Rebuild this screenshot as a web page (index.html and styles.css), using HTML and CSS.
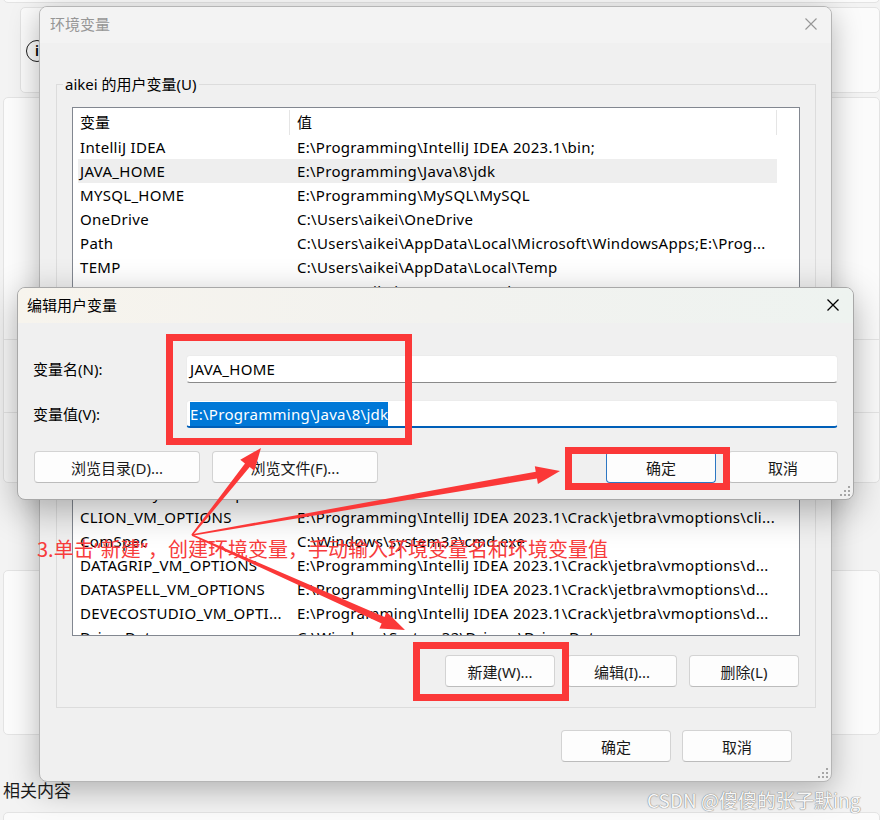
FILE: index.html
```html
<!DOCTYPE html>
<html lang="zh-CN">
<head>
<meta charset="utf-8">
<title>环境变量</title>
<link rel="stylesheet" href="styles.css">
</head>
<body>
<div class="desk">
  <div class="settings">
    <div class="card c0"></div>
    <div class="card c1"><span class="info-ic">i</span></div>
    <div class="card c2">
      <div class="srow s1"></div>
      <div class="srow s2"></div>
      <div class="srow s3"></div>
    </div>
    <div class="card c3"></div>
    <div class="related">相关内容</div>
    <div class="card c4"></div>
  </div>

  <div class="win env">
    <div class="titlebar">
      <span class="title">环境变量</span>
      <svg class="xicon" width="12" height="12" viewBox="0 0 12 12"><path d="M0.5 0.5L11.5 11.5M11.5 0.5L0.5 11.5" stroke="currentColor" stroke-width="1.1" fill="none"/></svg>
    </div>
    <div class="group">
      <span class="legend">aikei 的用户变量(U)</span>
      <div class="list">
        <div class="lrow lhead"><span class="c-name hc">变量</span><span class="c-val hc">值</span></div>
        <div class="lrow"><span class="c-name">IntelliJ IDEA</span><span class="c-val">E:\Programming\IntelliJ IDEA 2023.1\bin;</span></div>
        <div class="lrow sel"><span class="c-name">JAVA_HOME</span><span class="c-val">E:\Programming\Java\8\jdk</span></div>
        <div class="lrow"><span class="c-name">MYSQL_HOME</span><span class="c-val">E:\Programming\MySQL\MySQL</span></div>
        <div class="lrow"><span class="c-name">OneDrive</span><span class="c-val">C:\Users\aikei\OneDrive</span></div>
        <div class="lrow"><span class="c-name">Path</span><span class="c-val">C:\Users\aikei\AppData\Local\Microsoft\WindowsApps;E:\Prog...</span></div>
        <div class="lrow"><span class="c-name">TEMP</span><span class="c-val">C:\Users\aikei\AppData\Local\Temp</span></div>
        <div class="lrow"><span class="c-name">TMP</span><span class="c-val">C:\Users\aikei\AppData\Local\Temp</span></div>
        <div class="lgap"></div>
        <div class="lrow"><span class="c-name">ChocolateyLastPathUpdate</span><span class="c-val">133276542716213572</span></div>
        <div class="lrow"><span class="c-name">CLION_VM_OPTIONS</span><span class="c-val">E:\Programming\IntelliJ IDEA 2023.1\Crack\jetbra\vmoptions\cli...</span></div>
        <div class="lrow"><span class="c-name">ComSpec</span><span class="c-val">C:\Windows\system32\cmd.exe</span></div>
        <div class="lrow"><span class="c-name">DATAGRIP_VM_OPTIONS</span><span class="c-val">E:\Programming\IntelliJ IDEA 2023.1\Crack\jetbra\vmoptions\d...</span></div>
        <div class="lrow"><span class="c-name">DATASPELL_VM_OPTIONS</span><span class="c-val">E:\Programming\IntelliJ IDEA 2023.1\Crack\jetbra\vmoptions\d...</span></div>
        <div class="lrow"><span class="c-name">DEVECOSTUDIO_VM_OPTI...</span><span class="c-val">E:\Programming\IntelliJ IDEA 2023.1\Crack\jetbra\vmoptions\d...</span></div>
        <div class="lrow"><span class="c-name">DriverData</span><span class="c-val">C:\Windows\System32\Drivers\DriverData</span></div>
      </div>
      <div class="btnrow1">
        <span class="btn w110">新建(W)...</span>
        <span class="btn w110">编辑(I)...</span>
        <span class="btn w110">删除(L)</span>
      </div>
    </div>
    <div class="btnrow2">
      <span class="btn w110">确定</span>
      <span class="btn w110">取消</span>
    </div>
    <svg class="grip" width="10" height="10" viewBox="0 0 10 10"><g fill="#a6a6a6"><rect x="8" y="0" width="2" height="2"/><rect x="4" y="4" width="2" height="2"/><rect x="8" y="4" width="2" height="2"/><rect x="0" y="8" width="2" height="2"/><rect x="4" y="8" width="2" height="2"/><rect x="8" y="8" width="2" height="2"/></g></svg>
  </div>

  <div class="win edit">
    <div class="titlebar">
      <span class="title">编辑用户变量</span>
      <svg class="xicon" width="12" height="12" viewBox="0 0 12 12"><path d="M0.5 0.5L11.5 11.5M11.5 0.5L0.5 11.5" stroke="currentColor" stroke-width="1.3" fill="none"/></svg>
    </div>
    <div class="form">
      <label class="flabel">变量名(N):</label>
      <div class="field">JAVA_HOME</div>
      <label class="flabel">变量值(V):</label>
      <div class="field focus"><span class="seltext">E:\Programming\Java\8\jdk</span></div>
    </div>
    <div class="ebtns">
      <span class="btn w166">浏览目录(D)...</span>
      <span class="btn w166">浏览文件(F)...</span>
      <span class="spacer"></span>
      <span class="btn w110 default">确定</span>
      <span class="btn w110">取消</span>
    </div>
    <svg class="grip" width="10" height="10" viewBox="0 0 10 10"><g fill="#a6a6a6"><rect x="8" y="0" width="2" height="2"/><rect x="4" y="4" width="2" height="2"/><rect x="8" y="4" width="2" height="2"/><rect x="0" y="8" width="2" height="2"/><rect x="4" y="8" width="2" height="2"/><rect x="8" y="8" width="2" height="2"/></g></svg>
  </div>

  <div class="note">3.单击<span class="q">“</span>新建<span class="q">”</span>，创建环境变量，手动输入环境变量名和环境变量值</div>

  <svg class="marks" width="880" height="820" viewBox="0 0 880 820">
    <g fill="none" stroke="#fb3838" stroke-width="7">
      <rect x="169.5" y="337.5" width="239" height="104"/>
      <rect x="568.5" y="450.5" width="158" height="36"/>
      <rect x="416.5" y="645.5" width="149" height="52"/>
    </g>
    <g fill="#fb3838">
      <polygon points="192.63,535.50 249.68,467.10 254.38,470.83 261,448 240.28,459.65 244.98,463.38 191.37,534.50"/>
      <polygon points="192.14,535.79 536.96,478.56 537.90,483.98 560,471 534.82,466.24 535.76,471.66 191.86,534.21"/>
      <polygon points="191.67,535.73 381.65,623.42 379.41,628.44 405,630 386.75,612.00 384.51,617.02 192.33,534.27"/>
    </g>
  </svg>

  <div class="wm">CSDN @傻傻的张子默ing</div>
</div>
</body>
</html>
```

FILE: styles.css
```css
* { box-sizing: border-box; }
html, body { margin: 0; padding: 0; }
body {
  width: 880px;
  height: 820px;
  overflow: hidden;
  font-family: "Noto Sans", "Noto Sans CJK SC", sans-serif;
  font-size: 15px;
  color: #000;
  background: #f3f3f3;
}
.desk {
  position: relative;
  width: 880px;
  height: 820px;
  overflow: hidden;
  background: #f3f3f3;
}

/* background settings window */
.settings { display: flex; flex-direction: column; padding-left: 3px; }
.card { background: #fbfbfb; border: 1px solid #e3e3e3; border-radius: 5px; flex: none; }
.c0 { height: 14px; margin-top: -11px; }
.c1 { height: 86px; margin-top: 4px; margin-left: 17px; padding: 32px 0 0 5px; }
.c2 { height: 386px; margin-top: 4px; display: flex; flex-direction: column; }
.srow { border-bottom: 1px solid #e6e6e6; }
.s1 { height: 242px; }
.s2 { height: 73px; }
.s3 { flex: 1; border-bottom: 0; }
.c3 { height: 165px; margin-top: 87px; }
.related {
  margin-top: 44px;
  height: 24px;
  line-height: 24px;
  font-size: 17px;
  color: #1b1b1b;
}
.c4 { height: 40px; margin-top: 9px; }
.info-ic {
  width: 22px;
  height: 22px;
  border: 1.5px solid #1f1f1f;
  border-radius: 50%;
  display: flex;
  align-items: center;
  justify-content: center;
  font-size: 14px;
  font-weight: 600;
  line-height: 1;
}

/* windows */
.win {
  position: absolute;
  border-radius: 8px;
  display: flex;
  flex-direction: column;
  overflow: hidden;
}
.titlebar {
  flex: none;
  display: flex;
  align-items: center;
  justify-content: space-between;
}
.env {
  left: 39px;
  top: 6px;
  width: 793px;
  height: 776px;
  background: #f0f0f0;
  border: 1px solid #b5b5b5;
  box-shadow: 0 8px 30px rgba(0, 0, 0, 0.28);
}
.env .titlebar {
  height: 36px;
  background: #f3f3f3;
  padding: 0 14px 3px 10px;
  color: #969696;
}
.xicon { display: block; }

.group {
  position: relative;
  margin: 41px 15px 0 16px;
  border: 1px solid #dcdcdc;
  padding: 22px 15px 20px;
}
.legend {
  position: absolute;
  top: -11px;
  left: 6px;
  padding: 0 2px;
  background: #f0f0f0;
  line-height: 20px;
  color: #000;
}
.list {
  height: 529px;
  background: #fff;
  border: 1px solid #828790;
  overflow: hidden;
  padding-left: 5px;
  letter-spacing: 0.3px;
}
.lrow {
  display: flex;
  width: 699px;
  height: 24px;
  line-height: 24px;
  white-space: nowrap;
}
.lhead { height: 27px; padding-top: 2px; line-height: 25px; letter-spacing: 0; }
.c-name { width: 212px; padding-left: 2px; overflow: hidden; flex: none; }
.c-val { width: 487px; padding-left: 7px; overflow: hidden; flex: none; }
.hc { border-right: 1px solid #e5e5e5; }
.sel { background: #eeeeee; }
.lgap { height: 178px; flex: none; }

.btn {
  display: flex;
  align-items: center;
  justify-content: center;
  height: 32px;
  background: #fdfdfd;
  border: 1px solid #d3d3d3;
  border-bottom-color: #bcbcbc;
  border-radius: 4px;
  font-size: 15px;
  color: #1a1a1a;
  flex: none;
}
.w110 { width: 110px; }
.w166 { width: 166px; }
.btnrow1 {
  display: flex;
  justify-content: flex-end;
  gap: 12px;
  margin: 19px 1px 0 0;
}
.btnrow2 {
  display: flex;
  justify-content: flex-end;
  gap: 11px;
  margin: 22px 39px 0 0;
}
.grip { position: absolute; right: 3px; bottom: 3px; }

/* edit dialog */
.edit {
  left: 17px;
  top: 287px;
  width: 837px;
  height: 213px;
  background: #f0f0f0;
  border: 1px solid #a8a8a8;
  box-shadow: 0 10px 36px rgba(0, 0, 0, 0.3);
}
.edit .titlebar {
  height: 35px;
  padding: 0 14px 2px 9px;
  background: linear-gradient(90deg, #f7f4ed, #f2f2ef 50%, #eef3f0);
  color: #000;
}
.form {
  display: grid;
  grid-template-columns: 153px 1fr;
  row-gap: 17px;
  align-items: center;
  padding: 32px 15px 0;
}
.flabel { line-height: 20px; }
.field {
  height: 28px;
  background: #fff;
  border: 1px solid #ececec;
  border-bottom-color: #8a8a8a;
  border-radius: 4px;
  padding-left: 3px;
  line-height: 26px;
  white-space: nowrap;
  letter-spacing: 0.3px;
}
.field.focus { border-bottom: 2px solid #005fb8; }
.seltext { background: #0078d7; color: #fff; padding: 2px 0; }
.ebtns {
  display: flex;
  gap: 12px;
  margin: 23px 15px 0 16px;
}
.spacer { flex: 1; }
.btn.default {
  border-color: #2d77c3;
  border-top-color: #dde6ef;
}

/* annotations */
.marks { position: absolute; left: 0; top: 0; pointer-events: none; }
.note {
  position: absolute;
  left: 37px;
  top: 536px;
  font-size: 20px;
  line-height: 26px;
  color: #f73c3c;
  white-space: nowrap;
  font-family: "Noto Sans CJK SC", sans-serif;
}
.note .q { font-family: "Noto Sans", sans-serif; }
.wm {
  position: absolute;
  left: 647px;
  top: 788px;
  font-size: 19px;
  line-height: 24px;
  color: #f7f7f7;
  text-shadow: 0 0 1px #7a7a7a, 0 0 1px #7a7a7a;
  white-space: nowrap;
  font-family: "Noto Sans CJK SC", sans-serif;
}
```
